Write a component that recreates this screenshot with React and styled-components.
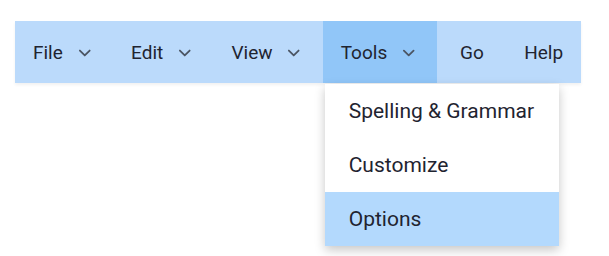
import styled, { createGlobalStyle } from "styled-components";
import { ChevronDown } from "lucide-react";

const GlobalStyle = createGlobalStyle`
  * {
    box-sizing: border-box;
  }
  body {
    margin: 0;
    background: #ffffff;
    font-family: Roboto, "Noto Sans", Arial, sans-serif;
  }
`;

const Page = styled.div`
  min-height: 256px;
  padding: 21px 15px;
`;

const MenuBar = styled.nav`
  display: flex;
  width: 566px;
  height: 62px;
  background: #bbdafb;
  box-shadow: 0 2px 3px rgba(0, 0, 0, 0.06);
`;

const MenuItem = styled.div`
  position: relative;
  display: flex;
  align-items: center;
  justify-content: center;
  gap: 11.7px;
  min-width: 69px;
  padding: ${(p) => (p.$sub ? "0 19px 0 18px" : "0 18px")};
  height: 100%;
  font-size: 19px;
  color: #1f2430;
  background: ${(p) => (p.$active ? "#91c6f8" : "transparent")};
  cursor: pointer;

  svg {
    color: #4b5563;
    margin-top: 1px;
  }
`;

const Dropdown = styled.ul`
  position: absolute;
  top: 100%;
  left: 2px;
  width: 234px;
  margin: 1px 0 0;
  padding: 0;
  list-style: none;
  background: #ffffff;
  box-shadow: 0 4px 10px rgba(0, 0, 0, 0.22);
  z-index: 10;
`;

const DropdownItem = styled.li`
  display: flex;
  align-items: center;
  height: 54px;
  padding: 0 24px;
  font-size: 21px;
  color: #1f2430;
  white-space: nowrap;
  background: ${(p) => (p.$selected ? "#b3d9fd" : "transparent")};
`;

const menus = [
  { label: "File", sub: true },
  { label: "Edit", sub: true },
  { label: "View", sub: true },
  { label: "Tools", sub: true, open: true },
  { label: "Go" },
  { label: "Help" },
];

const toolsItems = ["Spelling & Grammar", "Customize", "Options"];

export default function App() {
  return (
    <Page>
      <GlobalStyle />
      <MenuBar>
        {menus.map((m) => (
          <MenuItem key={m.label} $active={m.open} $sub={m.sub}>
            {m.label}
            {m.sub && <ChevronDown size={20} strokeWidth={2.2} />}
            {m.open && (
              <Dropdown>
                {toolsItems.map((t) => (
                  <DropdownItem key={t} $selected={t === "Options"}>
                    {t}
                  </DropdownItem>
                ))}
              </Dropdown>
            )}
          </MenuItem>
        ))}
      </MenuBar>
    </Page>
  );
}
